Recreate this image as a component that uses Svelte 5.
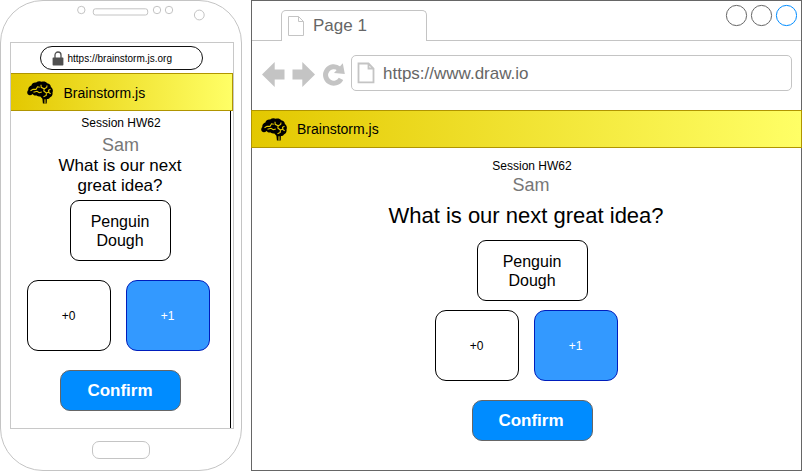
<script>
  const votes = ['+0', '+1'];
  let selected = $state('+1');
</script>

{#snippet brain()}
  <svg class="brain" width="26" height="23" viewBox="0 0 26 23">
    <path d="M1 13.5C-.3 12 .1 10 1.3 8.9 1 6.9 2.4 5.2 4.4 4.6 4.8 2.3 7 1.1 9.1 1.5 10.7.1 13-.2 14.8.7 17 .1 19.2.8 20.2 2.3c2.2.2 3.7 1.9 3.7 3.8 1.8 1.2 2.5 3.6 1.6 5.5.4 2.2-.6 4.2-2.6 4.8-.6 1.1-1.8 1.8-3 1.7l-.2 4.4-3.8.1-.5-4.8-2.1-2.4c-1.7 0-3-.2-3.6-1-1.8.4-3-.1-4-1.4-1.8 1.5-3.4 1.5-4.7.5z" />
    <g fill="none" stroke="#e3c800" stroke-width="1.1">
      <path d="M3.5 9.8 6 8.2l3 .2 1.5-2.6 2.3.4M6.5 11.3l3.5-1 2.2 1.4 2.6-.7M14 3.8l.2 2.5 3 1.5 2.5-1.3.3-2M17.2 7.8 16.8 10l2.6 2 2.4-1M19.4 12l-.2 2.5-2.7 1.3M23.5 8.2l-2 1 .5 2.5 1.7 1M18 18.3V22.5" />
    </g>
  </svg>
{/snippet}

{#snippet page()}
  <svg width="18" height="22" viewBox="0 0 18 22">
    <path d="M1.5 1.5h10l5 5v14h-15zM11.5 1.5v5h5" fill="none" stroke="#c4c4c4" />
  </svg>
{/snippet}

{#snippet controls()}
  <div class="votes">
    {#each votes as vote}
      <button class="vote" class:selected={selected === vote} onclick={() => (selected = vote)}>{vote}</button>
    {/each}
  </div>
  <button class="confirm">Confirm</button>
{/snippet}

<main>
  <section class="phone">
    <svg class="sensors" width="240" height="41" viewBox="1 1 240 41" fill="#fff" stroke="#c4c4c4">
      <circle cx="81.3" cy="10" r="3.7" />
      <rect x="93.3" y="8.8" width="54.4" height="6.2" rx="2.2" />
      <circle cx="157" cy="10" r="3.7" />
      <circle cx="169" cy="10" r="3.7" />
      <circle cx="199.3" cy="15" r="4.9" />
    </svg>
    <div class="screen">
      <div class="url">
        <svg width="12" height="15" viewBox="0 0 12 15">
          <path d="M3 7V4a3 3 0 0 1 6 0v3" fill="none" stroke="#505050" stroke-width="1.3" />
          <rect x=".6" y="6.4" width="10.8" height="8" rx=".7" fill="#505050" />
        </svg>
        <span>https://brainstorm.js.org</span>
      </div>
      <header>{@render brain()}<span>Brainstorm.js</span></header>
      <div class="content">
        <div class="session">Session HW62</div>
        <div class="name">Sam</div>
        <div class="question">What is our next<br />great idea?</div>
        <div class="idea">Penguin<br />Dough</div>
        {@render controls()}
      </div>
    </div>
    <div class="home"></div>
  </section>

  <section class="browser">
    <div class="tabs">
      <div class="edge"></div>
      <div class="tab">{@render page()}<span>Page 1</span></div>
      <div class="rest">
        <svg width="72" height="23" viewBox="0 0 72 23" fill="#fff" stroke="#666">
          <circle cx="11.5" cy="11.5" r="10.1" />
          <circle cx="36.5" cy="11.5" r="10.1" />
          <circle cx="61.5" cy="11.5" r="10.1" stroke="#008cff" />
        </svg>
      </div>
    </div>
    <div class="toolbar">
      <svg width="84" height="28" viewBox="262 61 84 28" fill="#c4c4c4">
        <path d="M262 74.5 274.7 62v7.5h9.8v10h-9.8V87zM315 74.5 302.3 62v7.5h-9.8v10h9.8V87z" />
        <path d="M339 68.7A8.2 8.2 0 1 0 341 78.8" fill="none" stroke="#c4c4c4" stroke-width="5" />
        <path d="M342.8 63.3 344.8 74 334 73z" />
      </svg>
      <div class="address">
        <svg width="18" height="22" viewBox="0 0 18 22">
          <path d="M1.5 1.5h10l5 5v13.8h-15zM11.5 1.5v5h5" fill="none" stroke="#c4c4c4" stroke-width="1.8" />
        </svg>
        <span>https://www.draw.io</span>
      </div>
    </div>
    <header>{@render brain()}<span>Brainstorm.js</span></header>
    <div class="content">
      <div class="session">Session HW62</div>
      <div class="name">Sam</div>
      <div class="question">What is our next great idea?</div>
      <div class="idea">Penguin<br />Dough</div>
      {@render controls()}
    </div>
  </section>
</main>

<style>
  :global(body) { background: #fff; }
  * { box-sizing: border-box; }
  main {
    display: flex;
    gap: 9px;
    width: 802px;
    height: 471px;
    font-family: "Liberation Sans", Arial, sans-serif;
    color: #000;
  }
  svg { display: block; flex: none; }
  .phone {
    width: 242px;
    height: 471px;
    border: 1px solid #c4c4c4;
    border-radius: 43px;
    display: flex;
    flex-direction: column;
    align-items: center;
  }
  .screen {
    width: 224px;
    height: 387px;
    margin-left: 1px;
    border: 1px solid #c8c8c8;
    display: flex;
    flex-direction: column;
  }
  .url {
    width: 163px;
    height: 24px;
    margin: 3px 0 3px 29px;
    padding-left: 11px;
    border: 1px solid #111;
    border-radius: 12px;
    display: flex;
    align-items: center;
    gap: 4px;
    font-size: 10px;
  }
  header {
    height: 38px;
    flex: none;
    border: 1px solid #b09500;
    background: linear-gradient(90deg, #e3c800, #ffff66);
    display: flex;
    align-items: center;
    gap: 10px;
    font-size: 14px;
  }
  .phone header {
    width: 222px;
    padding-left: 16px;
    border-left-width: 0;
    gap: 11px;
  }
  .phone header span { padding-top: 2px; }
  .content {
    display: flex;
    flex-direction: column;
    align-items: center;
    text-align: center;
  }
  .phone .content {
    width: 220px;
    flex: 1;
    padding-top: 5px;
    border-right: 1px solid #000;
  }
  .session { font-size: 12px; line-height: 14px; }
  .name { font-size: 18px; line-height: 20px; color: #777; }
  .phone .session { margin-right: -2px; }
  .phone .name { margin: 5px -1px 0 0; }
  .phone .question { margin-top: 1px; font-size: 17px; line-height: 20px; }
  .idea {
    width: 101px;
    height: 61px;
    margin-top: 5px;
    padding-top: 11px;
    border: 1px solid #000;
    border-radius: 9px;
    font-size: 16px;
    line-height: 19px;
  }
  .phone .idea { margin-top: 4px; }
  .votes { display: flex; gap: 15px; margin-top: 19px; }
  .phone .votes { margin-right: 4px; }
  button { padding: 0; font-family: inherit; }
  .vote {
    width: 84px;
    height: 71px;
    border: 1px solid #000;
    border-radius: 11px;
    background: #fff;
    font-size: 12px;
    color: #000;
  }
  .selected { background: #3399ff; border-color: #001dbc; color: #fff; }
  .confirm {
    width: 121px;
    height: 41px;
    margin-top: 19px;
    border: 1px solid #666;
    border-radius: 10px;
    background: #008cff;
    color: #fff;
    font-size: 17px;
    font-weight: bold;
  }
  .home {
    width: 58px;
    height: 18px;
    margin-top: 12px;
    border: 1px solid #c4c4c4;
    border-radius: 7px;
  }
  .browser {
    width: 551px;
    height: 471px;
    border: 1px solid #666;
    display: flex;
    flex-direction: column;
  }
  .tabs { display: flex; height: 40px; flex: none; }
  .edge { width: 29px; border-bottom: 1px solid #c4c4c4; }
  .tab {
    width: 146px;
    margin-top: 9px;
    padding: 0 0 0 5px;
    border: 1px solid #c4c4c4;
    border-bottom: 0;
    border-radius: 5px 5px 0 0;
    display: flex;
    align-items: center;
    gap: 8px;
    font-size: 17px;
    color: #666;
  }
  .rest {
    flex: 1;
    padding: 3px 4px 0 0;
    border-bottom: 1px solid #c4c4c4;
    display: flex;
    justify-content: flex-end;
  }
  .toolbar { display: flex; height: 69px; padding: 14px 9px 0 10px; gap: 5px; flex: none; }
  .toolbar > svg { margin-top: 6px; }
  .address {
    flex: 1;
    height: 36px;
    padding-left: 5px;
    border: 1px solid #c4c4c4;
    border-radius: 5px;
    display: flex;
    align-items: center;
    gap: 8px;
    font-size: 17px;
    color: #666;
  }
  .address span { padding-top: 2px; }
  .browser header { margin: 0 -1px; padding-left: 9px; }
  .browser .content { padding-top: 11px; }
  .browser .session { margin-right: -11px; }
  .browser .name { margin: 2px -9px 0 0; }
  .browser .question { margin: 8px 1px 0 0; font-size: 22px; line-height: 26px; }
  .browser .idea { width: 111px; margin: 11px -12px 0 0; padding-right: 1px; }
  .browser .votes { margin-top: 9px; }
  .browser .vote { padding-right: 1px; }
  .browser .confirm { margin-right: -12px; padding-right: 3px; }
</style>
